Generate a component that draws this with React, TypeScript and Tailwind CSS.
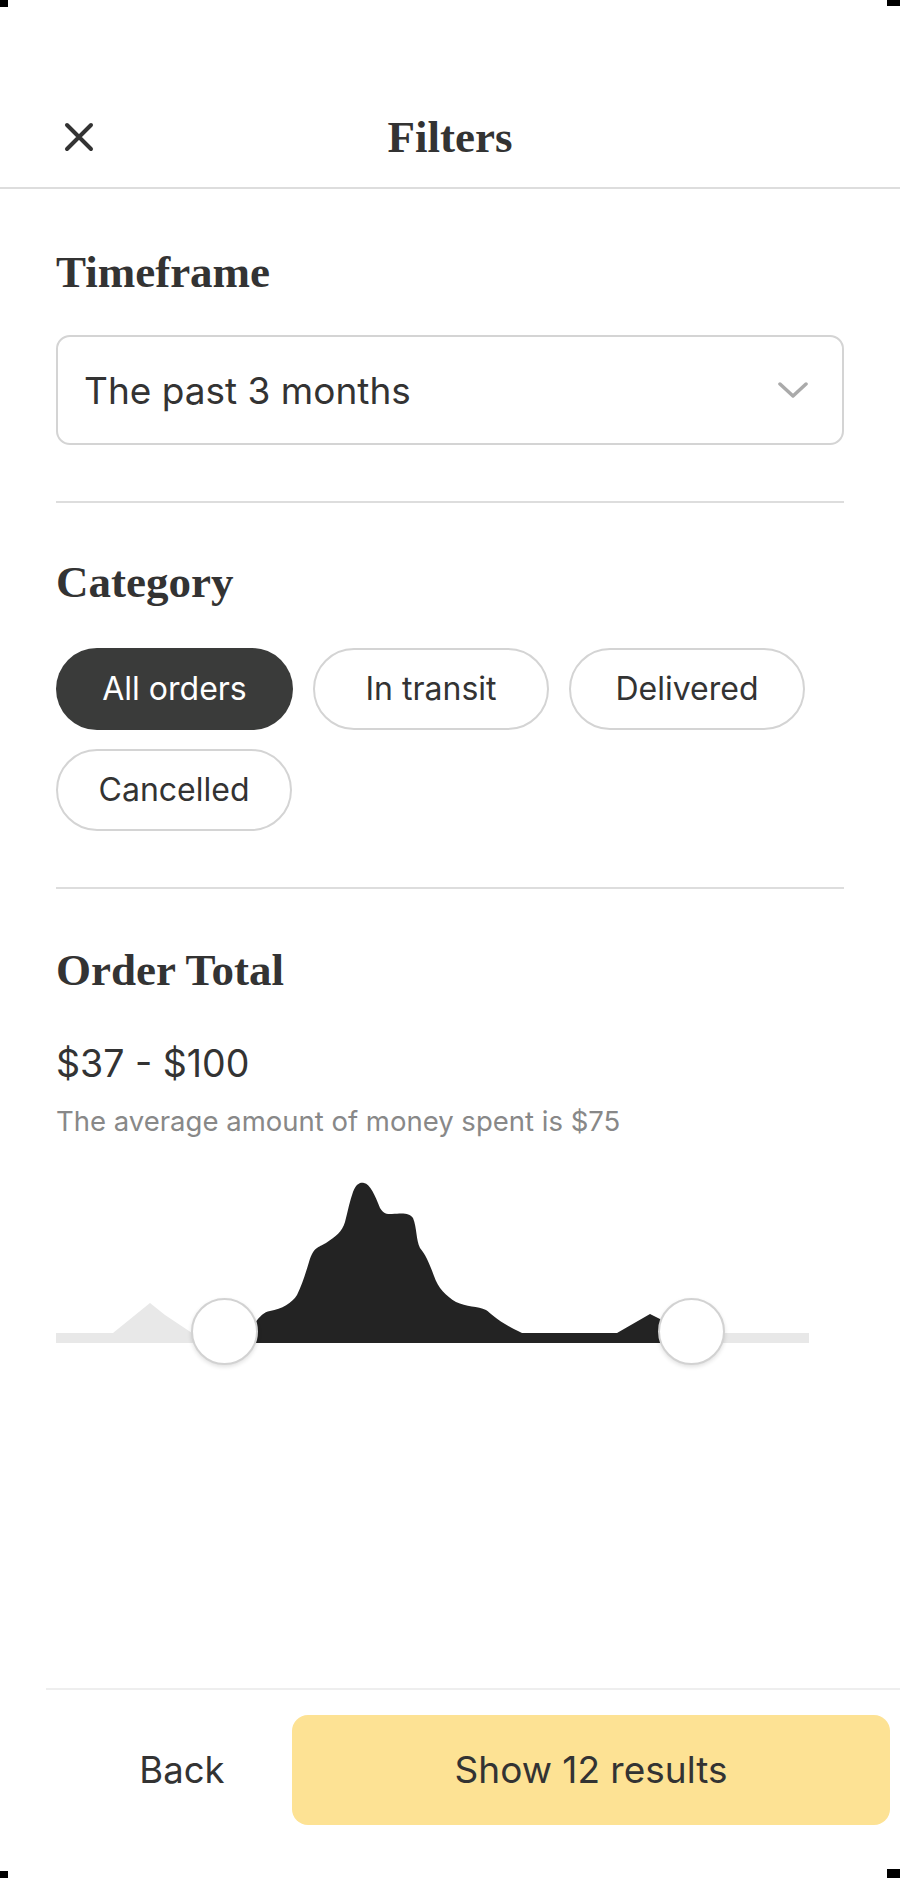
import React from 'react';

const serif = { fontFamily: '"Liberation Serif", "DejaVu Serif", serif' };

const chips = ['All orders', 'In transit', 'Delivered', 'Cancelled'];

// histogram outline in page coordinates (svg viewBox matches the page)
const selectedArea =
  'M255,1343 L255,1323 C260,1316 264,1312 270,1311 C282,1309 292,1303 297,1295 C302,1285 305,1275 309,1262 C314,1246 318,1248 326,1243 C336,1236 342,1232 345,1222 C348,1210 350,1200 353,1192 C356,1184 360,1182 364,1183 C370,1184 375,1195 380,1208 C384,1214 386,1214 392,1214 C404,1213 409,1213 413,1218 C417,1228 416,1240 420,1248 C426,1255 430,1265 434,1276 C438,1288 446,1296 456,1302 C466,1307 478,1306 486,1310 C492,1314 498,1322 522,1333 L617,1333 L650,1314 L662,1320 L662,1343 Z';

const leftBump = 'M113,1333 L150,1303 L165,1315 L192,1333 Z';

function Chart() {
  return (
    <div className="relative mt-[40px] h-[200px] w-full">
      <svg className="absolute inset-0" width="788" height="200" viewBox="56 1175 788 200">
        <rect x="56" y="1333" width="753" height="10" fill="#e8e8e8" />
        <path d={leftBump} fill="#e8e8e8" />
        <path d={selectedArea} fill="#232323" />
      </svg>
      <div className="absolute left-[135px] top-[123px] h-[67px] w-[67px] rounded-full border-2 border-[#d2d2d2] bg-white shadow-[0_2px_4px_rgba(0,0,0,0.12)]" />
      <div className="absolute left-[602px] top-[123px] h-[67px] w-[67px] rounded-full border-2 border-[#d2d2d2] bg-white shadow-[0_2px_4px_rgba(0,0,0,0.12)]" />
    </div>
  );
}

export default function App() {
  return (
    <div
      className="relative flex h-[1878px] w-[900px] flex-col overflow-hidden bg-white text-[#333333]"
      style={{ fontFamily: 'Inter, "Noto Sans", sans-serif' }}
    >
      {/* device corners */}
      <div className="absolute left-0 top-0 h-[7px] w-[8px] bg-black" />
      <div className="absolute right-0 top-0 h-[6px] w-[13px] bg-black" />
      <div className="absolute bottom-0 left-0 h-[7px] w-[8px] bg-black" />
      <div className="absolute bottom-0 right-0 h-[9px] w-[13px] bg-black" />

      <header className="grid grid-cols-[1fr_auto_1fr] items-center border-b-2 border-[#dddddd] pb-[25px] pt-[112px]">
        <div className="pl-[63px]">
          <svg width="32" height="32" viewBox="0 0 32 32" fill="none">
            <path d="M4 4 L28 28 M28 4 L4 28" stroke="#333333" strokeWidth="4" strokeLinecap="round" />
          </svg>
        </div>
        <h1 className="text-[45px] font-bold leading-[50px] text-[#333333]" style={serif}>
          Filters
        </h1>
        <div />
      </header>

      <main className="flex-1 px-[56px]">
        <section className="pt-[61px]">
          <h2 className="text-[45px] font-bold leading-[45px]" style={serif}>
            Timeframe
          </h2>
          <div className="mt-[40px] flex h-[110px] items-center justify-between rounded-[14px] border-2 border-[#d4d4d4] pl-[26px] pr-[34px]">
            <span className="text-[37px] leading-none text-[#333333]">The past 3 months</span>
            <svg width="30" height="18" viewBox="0 0 30 18" fill="none">
              <path d="M2 3 L15 15 L28 3" stroke="#aaaaaa" strokeWidth="3.5" strokeLinecap="round" strokeLinejoin="round" />
            </svg>
          </div>
        </section>

        <div className="mt-[56px] h-[2px] bg-[#dddddd]" />

        <section className="pt-[57px]">
          <h2 className="text-[45px] font-bold leading-[45px]" style={serif}>
            Category
          </h2>
          <div className="mt-[43px] flex flex-wrap gap-x-[20px] gap-y-[19px]">
            {chips.map((c, i) => (
              <div
                key={c}
                className={
                  i === 0
                    ? 'flex h-[82px] w-[237px] items-center justify-center rounded-full bg-[#3a3b3a] text-[32px] text-white'
                    : 'flex h-[82px] w-[236px] items-center justify-center rounded-full border-2 border-[#d4d4d4] text-[32px] text-[#333333]'
                }
              >
                {c}
              </div>
            ))}
          </div>
        </section>

        <div className="mt-[56px] h-[2px] bg-[#dddddd]" />

        <section className="pt-[59px]">
          <h2 className="text-[45px] font-bold leading-[45px]" style={serif}>
            Order Total
          </h2>
          <p className="mt-[52px] text-[37.5px] leading-none text-[#333333]">$37 - $100</p>
          <p className="mt-[25px] text-[27.5px] leading-none text-[#888888]">The average amount of money spent is $75</p>
          <Chart />
        </section>
      </main>

      <footer className="ml-[46px] flex items-start border-t-2 border-[#eeeeee] pb-[53px] pl-[26px] pt-[25px]">
        <button className="flex h-[110px] w-[220px] items-center justify-center text-[36.5px] text-[#333333]">Back</button>
        <button className="flex h-[110px] w-[598px] items-center justify-center rounded-[16px] bg-[#fde294] text-[37px] text-[#333333]">
          Show 12 results
        </button>
      </footer>
    </div>
  );
}
